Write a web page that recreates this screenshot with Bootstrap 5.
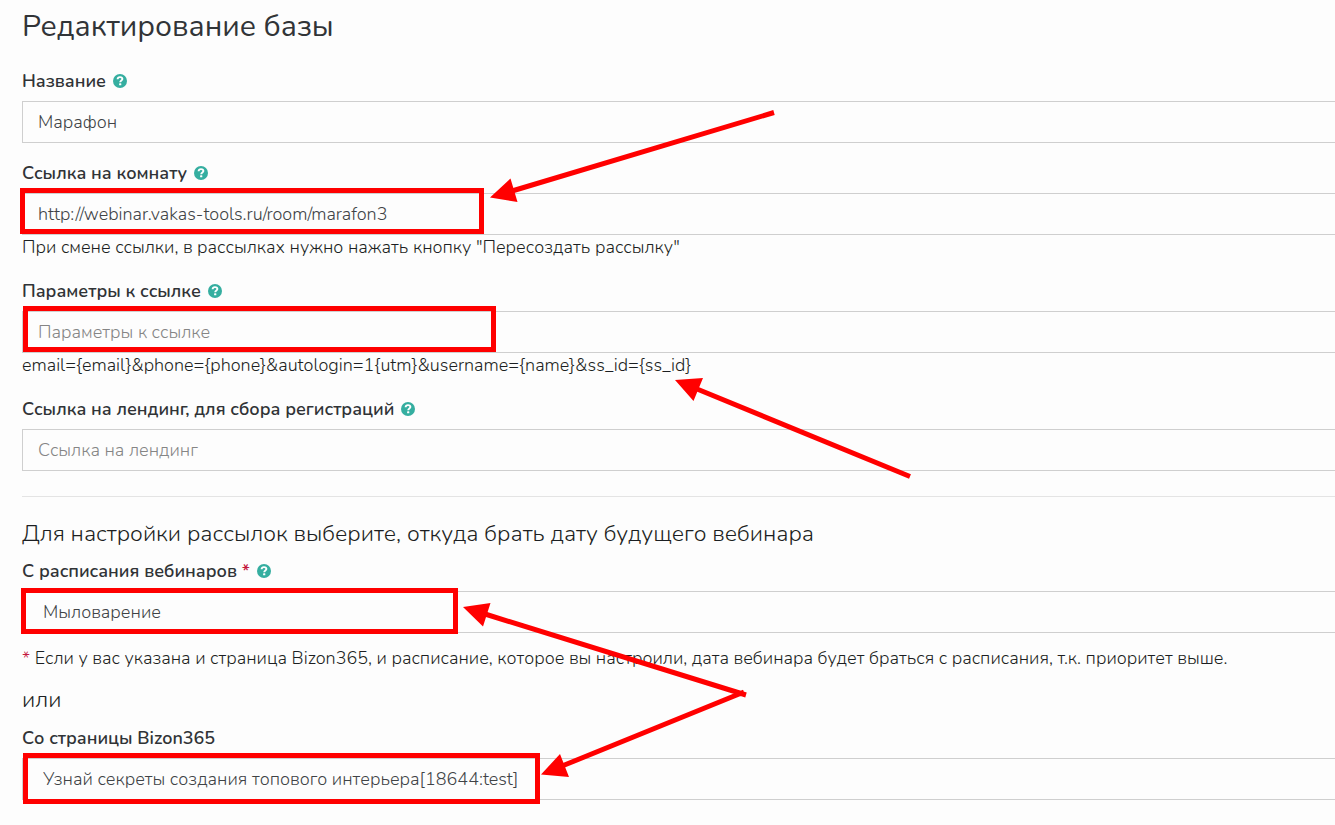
<!DOCTYPE html>
<html lang="ru">
<head>
<meta charset="utf-8">
<meta name="viewport" content="width=device-width, initial-scale=1">
<title>Редактирование базы</title>
<link href="https://cdn.jsdelivr.net/npm/bootstrap@5.3.0/dist/css/bootstrap.min.css" rel="stylesheet">
<style>
body { font-family: Nunito, "Noto Sans", sans-serif; font-size: 18px; font-weight: 300; line-height: 24px; color: #1c1f22; background: #fdfdfd; overflow-x: hidden; }
.page-form { padding: 8px 0 22px 22px; }
h1 { font-size: 30px; line-height: 38px; margin-bottom: 23px; font-weight: 400; color: #313437; }
h2 { font-size: 23px; line-height: 28px; margin-bottom: 11px; font-weight: 300; }
h2.or-title { margin: 16px 0 12px; }
.field { margin-bottom: 18px; }
.field .form-label { display: block; margin-bottom: 8px; font-weight: 600; line-height: 24px; color: #303336; }
.field .form-control, .field .form-select { height: 42px; padding: 8px 15px; border: 1px solid #cfcfcf; border-right: 0; border-radius: 0; font-size: 18px; font-weight: 300; line-height: 24px; color: #404346; background: #fdfdfd; box-shadow: none; }
.field .form-select { padding-left: 20px; }
.field .form-control::placeholder { color: #858585; opacity: 1; }
.hint { margin: 0 0 20px; }
.note { margin: 13px 0 0; }
.divider { margin: 25px 0 23px; border-top: 1px solid #e4e4e4; opacity: 1; }
.help-icon { width: 14px; height: 14px; margin-left: 2px; vertical-align: -1px; }
.req { color: #c4183c; }
.marks { width: 920px; height: 820px; pointer-events: none; }
</style>
<script src="https://cdn.jsdelivr.net/npm/bootstrap@5.3.0/dist/js/bootstrap.bundle.min.js"></script>
</head>
<body>
<svg width="0" height="0" class="position-absolute" aria-hidden="true">
  <symbol id="help" viewBox="0 0 14 14">
    <circle cx="7" cy="7" r="7" fill="#35aea0"/>
    <path d="M4.600 5.300C4.700 3.700 5.800 3.100 7 3.100c1.400 0 2.400.8 2.400 2C9.400 6.500 7.200 6.500 7.200 8.300" fill="none" stroke="#fff" stroke-width="1.900"/>
    <rect x="6.100" y="9.300" width="2.200" height="2" rx=".4" fill="#fff"/>
  </symbol>
</svg>
<main class="position-relative">
  <form class="page-form container-fluid">
    <h1>Редактирование базы</h1>
    <div class="field">
      <label class="form-label" for="title">Название <svg class="help-icon"><use href="#help"/></svg></label>
      <input class="form-control" type="text" id="title" value="Марафон">
    </div>
    <div class="field">
      <label class="form-label" for="room">Ссылка на комнату <svg class="help-icon"><use href="#help"/></svg></label>
      <input class="form-control" type="text" id="room" value="http://webinar.vakas-tools.ru/room/marafon3">
      <p class="hint">При смене ссылки, в рассылках нужно нажать кнопку "Пересоздать рассылку"</p>
    </div>
    <div class="field">
      <label class="form-label" for="params">Параметры к ссылке <svg class="help-icon"><use href="#help"/></svg></label>
      <input class="form-control" type="text" id="params" placeholder="Параметры к ссылке">
      <p class="hint">email={email}&amp;phone={phone}&amp;autologin=1{utm}&amp;username={name}&amp;ss_id={ss_id}</p>
    </div>
    <div class="field">
      <label class="form-label" for="landing">Ссылка на лендинг, для сбора регистраций <svg class="help-icon"><use href="#help"/></svg></label>
      <input class="form-control" type="text" id="landing" placeholder="Ссылка на лендинг">
    </div>
    <hr class="divider">
    <h2>Для настройки рассылок выберите, откуда брать дату будущего вебинара</h2>
    <div class="field mb-0">
      <label class="form-label" for="schedule">С расписания вебинаров <span class="req">*</span> <svg class="help-icon"><use href="#help"/></svg></label>
      <select class="form-select" id="schedule"><option>Мыловарение</option></select>
    </div>
    <p class="note"><span class="req">*</span> Если у вас указана и страница Bizon365, и расписание, которое вы настроили, дата вебинара будет браться с расписания, т.к. приоритет выше.</p>
    <h2 class="or-title">или</h2>
    <div class="field mb-0">
      <label class="form-label" for="bizon">Со страницы Bizon365</label>
      <select class="form-select" id="bizon"><option>Узнай секреты создания топового интерьера[18644:test]</option></select>
    </div>
  </form>
  <svg class="marks position-absolute top-0 start-0" viewBox="0 0 920 820" fill="none" stroke="#f00" stroke-width="5" aria-hidden="true">
    <path d="M22.500 190.500h459v41h-459zM25.500 308.500h468v41h-468zM23.500 590.500h432v41h-432zM25.500 755.500h512v46h-512z"/>
    <path d="M774 112.500L512 191M910 476.500L697 389M746 695L485 614M744 692L562 766"/>
    <path stroke="none" fill="#f00" d="M490 197.500L510.500 178.500L517.500 202zM675 380L703 378L693.500 401zM463 607L490.500 603L483 626.500zM541 774.500L560 754L569 777z"/>
  </svg>
</main>
</body>
</html>
